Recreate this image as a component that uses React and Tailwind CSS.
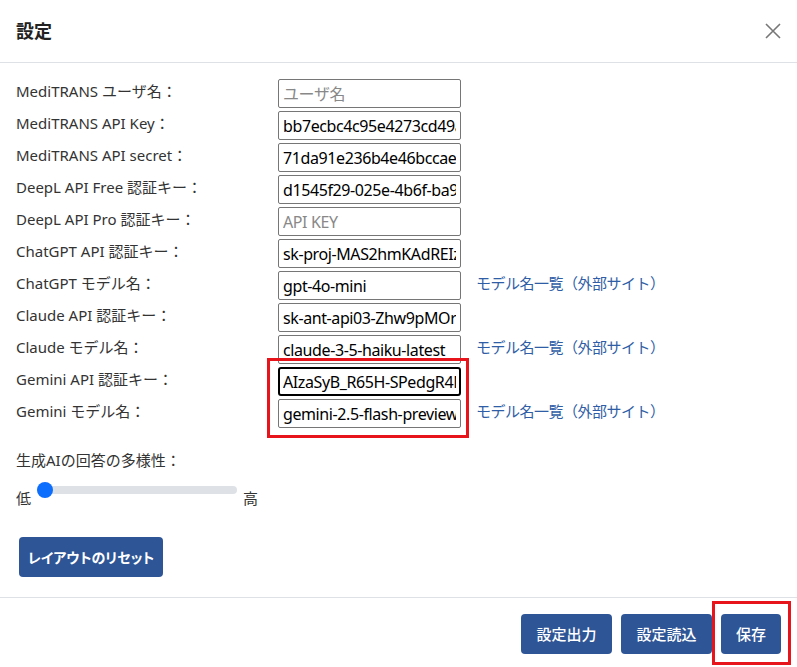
import React, { useState } from "react";

const font = { fontFamily: '"Noto Sans", "Noto Sans CJK JP", sans-serif' };
const palt = { fontFeatureSettings: '"palt"' };

const rows = [
    { label: "MediTRANS ユーザ名：", value: "", placeholder: "ユーザ名" },
    { label: "MediTRANS API Key：", value: "bb7ecbc4c95e4273cd49a1f0" },
    { label: "MediTRANS API secret：", value: "71da91e236b4e46bccaea9d2" },
    { label: "DeepL API Free 認証キー：", value: "d1545f29-025e-4b6f-ba9c" },
    { label: "DeepL API Pro 認証キー：", value: "", placeholder: "API KEY" },
    { label: "ChatGPT API 認証キー：", value: "sk-proj-MAS2hmKAdREIz8" },
    { label: "ChatGPT モデル名：", value: "gpt-4o-mini", link: true },
    { label: "Claude API 認証キー：", value: "sk-ant-api03-Zhw9pMOrX" },
    { label: "Claude モデル名：", value: "claude-3-5-haiku-latest", link: true },
    { label: "Gemini API 認証キー：", value: "AIzaSyB_R65H-SPedgR4MkQ", focus: true },
    { label: "Gemini モデル名：", value: "gemini-2.5-flash-preview", link: true },
];

function Row({ row }) {
    return (
        <div className="flex items-start h-[29px]">
            <div className="w-[262px] shrink-0 text-[15px] leading-[24px] text-[#333]">{row.label}</div>
            <input
                defaultValue={row.value}
                placeholder={row.placeholder}
                className={
                    row.focus
                        ? "w-[183px] h-[29px] px-[3px] text-[16px] tracking-[-0.4px] text-black border-2 border-black rounded-[3px] outline-none"
                        : "w-[183px] h-[29px] px-[4px] text-[16px] tracking-[-0.4px] text-black border border-[#767676] rounded-[2px] outline-none placeholder:text-[#888]"
                }
                style={font}
            />
            {row.link && (
                <a className="ml-[15px] text-[15px] leading-[24px] tracking-[-0.5px] text-[#2f5ea6] whitespace-nowrap">
                    モデル名一覧（外部サイト）
                </a>
            )}
        </div>
    );
}

export default function App() {
    const [value] = useState(0);

    return (
        <div className="relative w-[797px] h-[667px] bg-white overflow-hidden" style={font}>
            {/* Header */}
            <div className="h-[63px] flex items-center justify-between px-4 border-b border-[#dee2e6]">
                <h1 className="text-[18px] font-bold text-[#222]">設定</h1>
                <svg width="18" height="18" viewBox="0 0 18 18" className="mr-[-1px]">
                    <path d="M2 2 L16 16 M16 2 L2 16" stroke="#777" strokeWidth="1.6" />
                </svg>
            </div>

            {/* Body */}
            <div className="h-[534px] px-4 pt-[16px]">
                <div className="flex flex-col gap-[3px]">
                    {rows.map((r) => (
                        <Row key={r.label} row={r} />
                    ))}
                </div>

                <div className="mt-[20px] text-[15px] leading-[24px] text-[#333]">生成AIの回答の多様性：</div>

                <div className="flex items-start mt-[10px]">
                    <span className="text-[15px] leading-[24px] mt-[4px] text-[#333]">低</span>
                    <div className="relative w-[200px] h-[16px] mx-[6px] flex items-center">
                        <div className="w-full h-[8px] rounded-full bg-[#dee2e6]" />
                        <div
                            className="absolute top-0 w-[16px] h-[16px] rounded-full bg-[#0d6efd]"
                            style={{ left: `${value * 184}px` }}
                        />
                    </div>
                    <span className="text-[15px] leading-[24px] mt-[4px] text-[#333]">高</span>
                </div>

                <button
                    className="mt-[27px] ml-[3px] w-[144px] h-[40px] rounded-[4px] bg-[#2e5596] text-white text-[14px] font-bold whitespace-nowrap"
                    style={palt}
                >
                    レイアウトのリセット
                </button>
            </div>

            {/* Footer */}
            <div className="border-t border-[#dee2e6] flex justify-end gap-[9px] px-4 pt-[16px]">
                <button className="w-[91px] h-[40px] rounded-[4px] bg-[#2e5596] text-white text-[15px] font-medium">設定出力</button>
                <button className="w-[91px] h-[40px] rounded-[4px] bg-[#2e5596] text-white text-[15px] font-medium">設定読込</button>
                <button className="w-[60px] h-[40px] rounded-[4px] bg-[#2e5596] text-white text-[15px] font-medium">保存</button>
            </div>

            {/* Annotation boxes */}
            <div className="absolute left-[267px] top-[358px] w-[202px] h-[80px] border-[3px] border-[#e8141c]" />
            <div className="absolute left-[712px] top-[601px] w-[79px] h-[64px] border-[3px] border-[#e8141c]" />
        </div>
    );
}
